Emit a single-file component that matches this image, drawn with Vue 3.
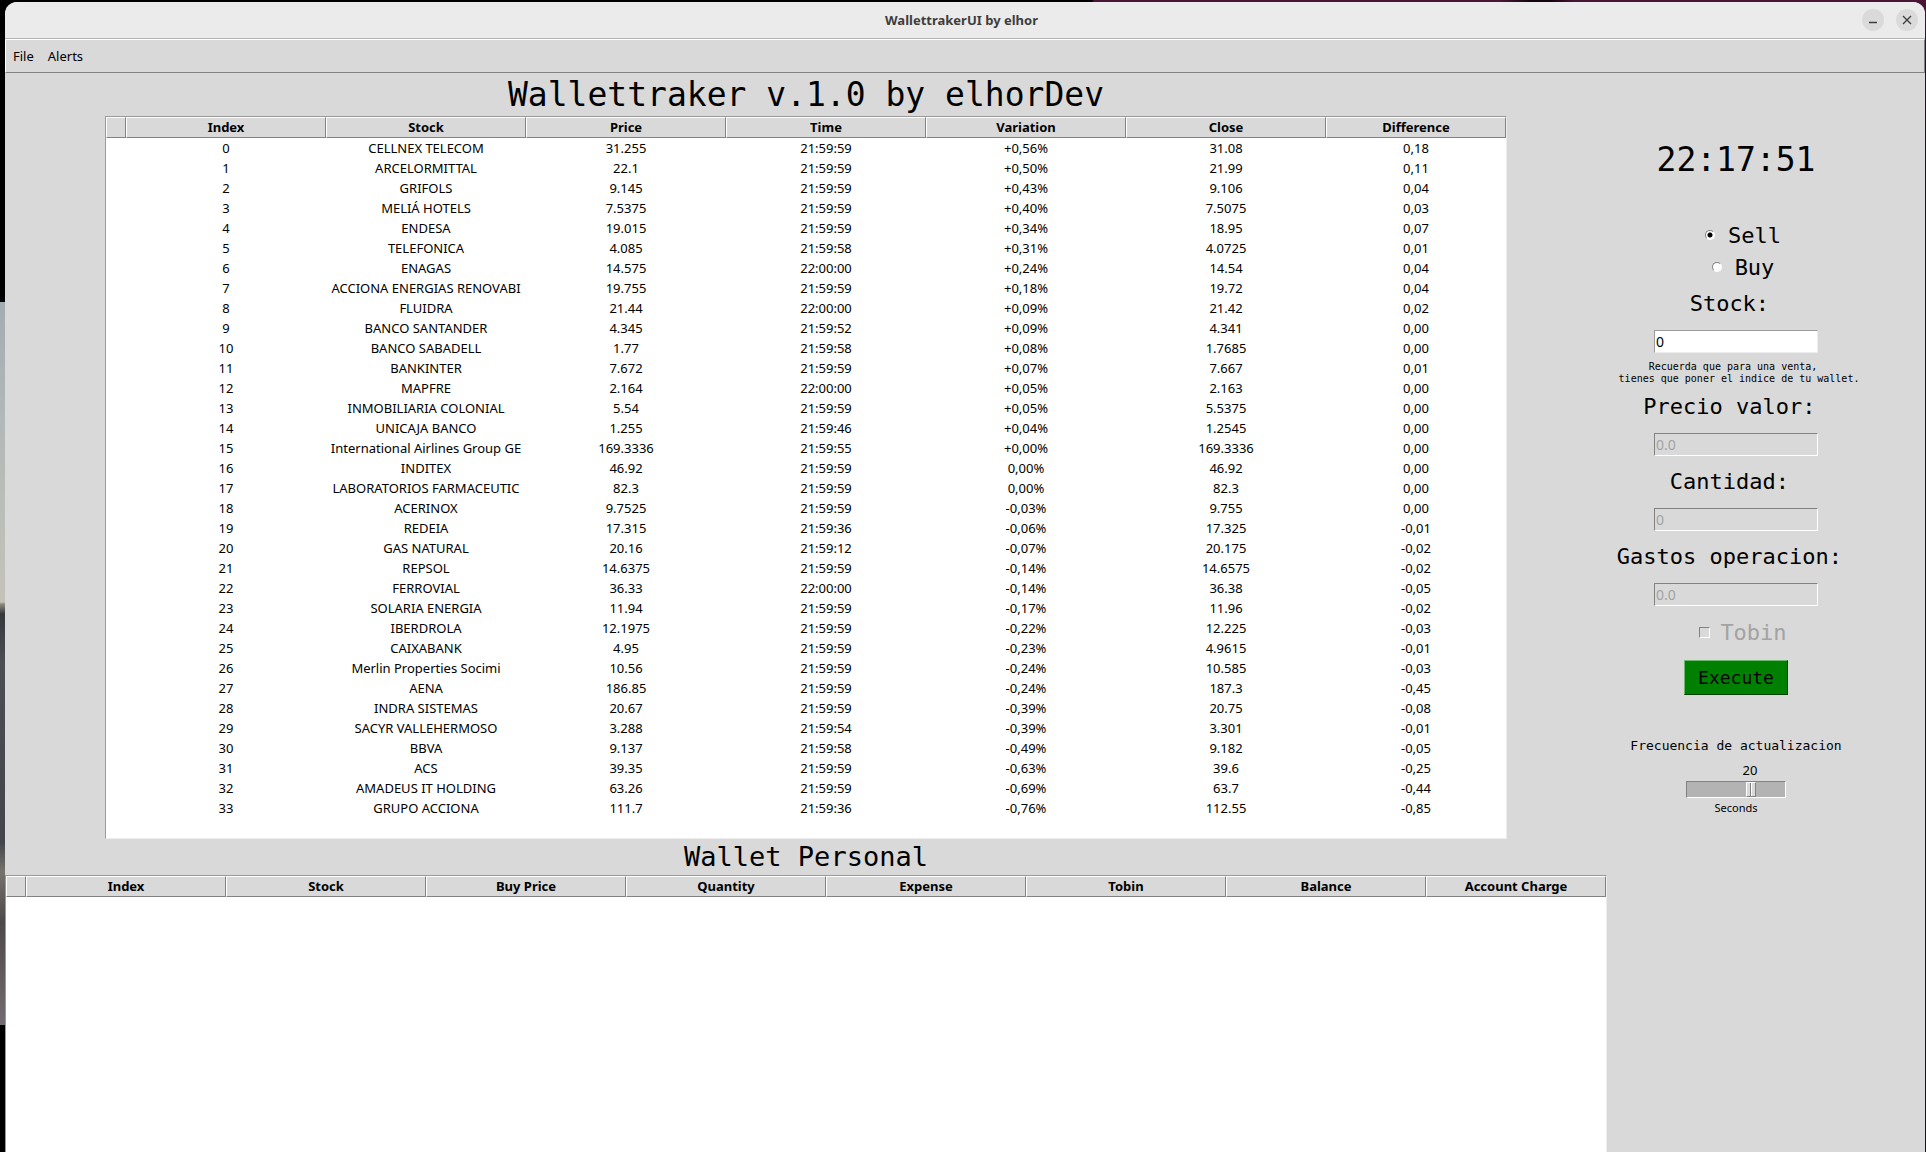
<script setup>
import { ref, computed } from 'vue'

const marketColumns = ['Index', 'Stock', 'Price', 'Time', 'Variation', 'Close', 'Difference']
const walletColumns = ['Index', 'Stock', 'Buy Price', 'Quantity', 'Expense', 'Tobin', 'Balance', 'Account Charge']

const quotes = [
  ['CELLNEX TELECOM', '31.255', '21:59:59', '+0,56%', '31.08', '0,18'],
  ['ARCELORMITTAL', '22.1', '21:59:59', '+0,50%', '21.99', '0,11'],
  ['GRIFOLS', '9.145', '21:59:59', '+0,43%', '9.106', '0,04'],
  ['MELIÁ HOTELS', '7.5375', '21:59:59', '+0,40%', '7.5075', '0,03'],
  ['ENDESA', '19.015', '21:59:59', '+0,34%', '18.95', '0,07'],
  ['TELEFONICA', '4.085', '21:59:58', '+0,31%', '4.0725', '0,01'],
  ['ENAGAS', '14.575', '22:00:00', '+0,24%', '14.54', '0,04'],
  ['ACCIONA ENERGIAS RENOVABI', '19.755', '21:59:59', '+0,18%', '19.72', '0,04'],
  ['FLUIDRA', '21.44', '22:00:00', '+0,09%', '21.42', '0,02'],
  ['BANCO SANTANDER', '4.345', '21:59:52', '+0,09%', '4.341', '0,00'],
  ['BANCO SABADELL', '1.77', '21:59:58', '+0,08%', '1.7685', '0,00'],
  ['BANKINTER', '7.672', '21:59:59', '+0,07%', '7.667', '0,01'],
  ['MAPFRE', '2.164', '22:00:00', '+0,05%', '2.163', '0,00'],
  ['INMOBILIARIA COLONIAL', '5.54', '21:59:59', '+0,05%', '5.5375', '0,00'],
  ['UNICAJA BANCO', '1.255', '21:59:46', '+0,04%', '1.2545', '0,00'],
  ['International Airlines Group GE', '169.3336', '21:59:55', '+0,00%', '169.3336', '0,00'],
  ['INDITEX', '46.92', '21:59:59', '0,00%', '46.92', '0,00'],
  ['LABORATORIOS FARMACEUTIC', '82.3', '21:59:59', '0,00%', '82.3', '0,00'],
  ['ACERINOX', '9.7525', '21:59:59', '-0,03%', '9.755', '0,00'],
  ['REDEIA', '17.315', '21:59:36', '-0,06%', '17.325', '-0,01'],
  ['GAS NATURAL', '20.16', '21:59:12', '-0,07%', '20.175', '-0,02'],
  ['REPSOL', '14.6375', '21:59:59', '-0,14%', '14.6575', '-0,02'],
  ['FERROVIAL', '36.33', '22:00:00', '-0,14%', '36.38', '-0,05'],
  ['SOLARIA ENERGIA', '11.94', '21:59:59', '-0,17%', '11.96', '-0,02'],
  ['IBERDROLA', '12.1975', '21:59:59', '-0,22%', '12.225', '-0,03'],
  ['CAIXABANK', '4.95', '21:59:59', '-0,23%', '4.9615', '-0,01'],
  ['Merlin Properties Socimi', '10.56', '21:59:59', '-0,24%', '10.585', '-0,03'],
  ['AENA', '186.85', '21:59:59', '-0,24%', '187.3', '-0,45'],
  ['INDRA SISTEMAS', '20.67', '21:59:59', '-0,39%', '20.75', '-0,08'],
  ['SACYR VALLEHERMOSO', '3.288', '21:59:54', '-0,39%', '3.301', '-0,01'],
  ['BBVA', '9.137', '21:59:58', '-0,49%', '9.182', '-0,05'],
  ['ACS', '39.35', '21:59:59', '-0,63%', '39.6', '-0,25'],
  ['AMADEUS IT HOLDING', '63.26', '21:59:59', '-0,69%', '63.7', '-0,44'],
  ['GRUPO ACCIONA', '111.7', '21:59:36', '-0,76%', '112.55', '-0,85'],
]

const operation = ref('sell')
const stock = ref('0')
const price = ref('0.0')
const quantity = ref('0')
const expense = ref('0.0')
const tobin = ref(false)
const frequency = ref(20)
const maxFrequency = 30

// The thumb is 10px wide and travels inside the 98px trough.
const thumbCenter = computed(() => Math.floor((frequency.value / maxFrequency) * 88) + 6)
</script>

<template>
  <div class="desktop">
    <div class="window">
      <header class="titlebar">
        <span class="caption">WallettrakerUI by elhor</span>
        <div class="window-buttons">
          <button type="button" aria-label="Minimize">
            <svg width="22" height="22" viewBox="0 0 22 22"><path d="M7 13.5h8" /></svg>
          </button>
          <button type="button" aria-label="Close">
            <svg width="22" height="22" viewBox="0 0 22 22"><path d="M7 7l8 8M15 7l-8 8" /></svg>
          </button>
        </div>
      </header>

      <nav class="menubar">
        <button type="button">File</button>
        <button type="button">Alerts</button>
      </nav>

      <div class="content">
        <main class="tables">
          <h1>Wallettraker v.1.0 by elhorDev</h1>
          <div class="tree market">
            <table>
              <colgroup>
                <col class="stub">
                <col v-for="n in marketColumns.length - 1" :key="n">
                <col class="last">
              </colgroup>
              <thead>
                <tr>
                  <th></th>
                  <th v-for="c in marketColumns" :key="c" scope="col">{{ c }}</th>
                </tr>
              </thead>
              <tbody>
                <tr v-for="(row, i) in quotes" :key="i">
                  <td></td>
                  <td>{{ i }}</td>
                  <td v-for="(cell, j) in row" :key="j"><div class="clip">{{ cell }}</div></td>
                </tr>
              </tbody>
            </table>
          </div>

          <h2>Wallet Personal</h2>
          <div class="tree wallet">
            <table>
              <colgroup>
                <col class="stub">
                <col v-for="n in walletColumns.length - 1" :key="n">
                <col class="last">
              </colgroup>
              <thead>
                <tr>
                  <th></th>
                  <th v-for="c in walletColumns" :key="c" scope="col">{{ c }}</th>
                </tr>
              </thead>
            </table>
          </div>
        </main>

        <aside class="panel">
          <form class="order" @submit.prevent>
            <time class="clock">22:17:51</time>

            <label class="choice"><input v-model="operation" type="radio" name="operation" value="sell">Sell</label>
            <label class="choice"><input v-model="operation" type="radio" name="operation" value="buy">Buy</label>

            <div class="field">
              <label for="stock">Stock:{{ ' ' }}</label>
              <input id="stock" v-model="stock" type="text">
            </div>
            <p class="note">{{ 'Recuerda que para una venta, \n tienes que poner el indice de tu wallet.' }}</p>
            <div class="field">
              <label for="price">Precio valor:{{ ' ' }}</label>
              <input id="price" v-model="price" type="text" disabled>
            </div>
            <div class="field">
              <label for="quantity">Cantidad:{{ ' ' }}</label>
              <input id="quantity" v-model="quantity" type="text" disabled>
            </div>
            <div class="field">
              <label for="expense">Gastos operacion:{{ ' ' }}</label>
              <input id="expense" v-model="expense" type="text" disabled>
            </div>

            <label class="choice tobin"><input v-model="tobin" type="checkbox" disabled>Tobin</label>
            <button class="execute" type="submit">Execute</button>

            <label class="frequency" for="frequency">Frecuencia de actualizacion</label>
            <div class="scale">
              <output for="frequency" :style="{ left: thumbCenter + 'px' }">{{ frequency }}</output>
              <input id="frequency" v-model.number="frequency" type="range" min="0" :max="maxFrequency">
            </div>
            <span class="unit">Seconds</span>
          </form>
        </aside>
      </div>
    </div>
  </div>
</template>

<style>
body {
  margin: 0;
}
</style>

<style scoped>
* {
  box-sizing: border-box;
}

.desktop {
  display: flex;
  height: 100vh;
  overflow: hidden;
  padding: 2px 1px 0 5px;
  font-family: "Noto Sans", sans-serif;
  font-size: 13px;
  color: #000;
  background:
    linear-gradient(#a3acb1 0, #b3b8b8 120px, #c3c3b9 300px, #8c8c82 302px, #36383c 312px, #4c4e54 360px, #44464c 540px, #76726d 570px, #4d484a 620px, #736c70 724px) 0 302px / 5px 723px no-repeat,
    linear-gradient(90deg, #000 0, #000 1092px, #4a1637 1094px, #4a1637 1500px, #16040f 1530px, #16040f 1550px, #4a1637 1575px) 0 0 / 100% 2px no-repeat,
    linear-gradient(#4a1637 0, #2c0c22 60px, #17131a 140px, #17131a 100%) 100% 0 / 20px 100% no-repeat,
    #000;
}

.window {
  display: flex;
  flex: 1;
  flex-direction: column;
  min-width: 0;
  overflow: hidden;
  background: #d9d9d9;
  border-radius: 12px 12px 0 0;
}

.titlebar {
  display: grid;
  grid-template-columns: 1fr auto 1fr;
  align-items: center;
  height: 37px;
  padding-right: 7px;
  background: #ebebeb;
  border-bottom: 1px solid #b5b5b5;
}

.caption {
  grid-column: 2;
  font-weight: 700;
  color: #3d3d3d;
}

.window-buttons {
  display: flex;
  gap: 12px;
  justify-self: end;
}

.window-buttons button {
  width: 22px;
  height: 22px;
  padding: 0;
  background: #dadada;
  border: 0;
  border-radius: 50%;
}

.window-buttons svg {
  display: block;
  fill: none;
  stroke: #3d3d3d;
  stroke-width: 1.3;
}

.menubar {
  display: flex;
  gap: 4px;
  height: 34px;
  padding-left: 2px;
  border: 1px solid;
  border-color: #fff #828282 #828282 #fff;
}

.menubar button {
  padding: 0 5px;
  font: inherit;
  color: #000;
  background: none;
  border: 0;
}

.content {
  display: flex;
  flex: 1;
}

.tables {
  display: flex;
  flex: 1;
  flex-direction: column;
  min-width: 0;
}

h1,
h2 {
  margin: 0;
  font-family: "DejaVu Sans Mono", monospace;
  font-weight: 400;
  text-align: center;
}

h1 {
  font-size: 33px;
  line-height: 43px;
}

h2 {
  font-size: 27px;
  line-height: 36px;
}

.tree {
  background: #fff;
  border: 1px solid;
  border-color: #9a9a9a #ededed #ededed #9a9a9a;
}

.market {
  padding-bottom: 20px;
  margin: 0 100px;
}

.wallet {
  flex: 1;
  border-bottom: 0;
}

table {
  width: 100%;
  table-layout: fixed;
  border-spacing: 0;
}

.stub {
  width: 20px;
}

.last {
  width: 180px;
}

th {
  height: 21px;
  padding: 0;
  line-height: 19px;
  background: #d9d9d9;
  border: 1px solid;
  border-color: #fff #828282 #828282 #fff;
}

td {
  height: 20px;
  padding: 0 4px;
  line-height: 20px;
  text-align: center;
}

.clip {
  overflow: hidden;
  white-space: nowrap;
}

.panel {
  flex: 0 0 318px;
}

.order {
  display: flex;
  flex-direction: column;
  align-items: center;
  width: 258px;
  font-family: "DejaVu Sans Mono", monospace;
}

.clock {
  margin: 67px 0 39px;
  font-size: 33px;
  line-height: 40px;
}

.choice {
  display: flex;
  align-items: center;
  height: 32px;
  padding-left: 14px;
  font-size: 22px;
}

.choice input {
  width: 10px;
  height: 10px;
  margin: 0 13px 0 0;
  appearance: none;
  background: #fff;
  border: 1px solid;
  border-color: #828282 #fff #fff #828282;
  border-radius: 50%;
}

.choice input[type="radio"]:checked {
  background: radial-gradient(circle, #000 2px, #fff 3px);
}

.tobin {
  height: 30px;
  margin-top: 6px;
  color: #a3a3a3;
}

.tobin input {
  width: 11px;
  height: 11px;
  margin-right: 10px;
  background: #d9d9d9;
  border-radius: 0;
}

.field {
  display: flex;
  flex-direction: column;
  align-items: center;
  margin: 6px 0 5px;
}

.field label {
  margin-bottom: 11px;
  font-size: 22px;
  line-height: 30px;
  white-space: pre;
}

.field input {
  width: 164px;
  height: 23px;
  padding: 0 1px;
  font-family: "Noto Sans", sans-serif;
  font-size: 14px;
  color: #000;
  background: #fff;
  border: 1px solid;
  border-color: #9a9a9a #ededed #ededed #9a9a9a;
}

.field input:disabled {
  color: #a3a3a3;
  background: #d9d9d9;
  border-color: #828282 #fff #fff #828282;
}

.note {
  margin: 3px 0 1px;
  font-size: 10px;
  line-height: 12px;
  text-align: center;
  white-space: pre;
}

.execute {
  width: 104px;
  height: 35px;
  padding: 0;
  margin-top: 13px;
  font-family: inherit;
  font-size: 18px;
  color: #000;
  background: #008000;
  border: 1px solid;
  border-color: #6db66d #004000 #004000 #6db66d;
}

.frequency {
  margin-top: 41px;
  font-size: 13px;
  line-height: 20px;
}

.scale {
  position: relative;
  width: 100px;
  padding-top: 25px;
}

.scale output {
  position: absolute;
  top: 6px;
  font-family: "Noto Sans", sans-serif;
  font-size: 13px;
  line-height: 16px;
  transform: translateX(-50%);
}

.scale input {
  display: block;
  width: 100%;
  height: 17px;
  margin: 0;
  appearance: none;
  background: #b3b3b3;
  border: 1px solid;
  border-color: #828282 #fff #fff #828282;
}

.scale input::-webkit-slider-thumb {
  width: 10px;
  height: 15px;
  appearance: none;
  background: linear-gradient(90deg, #d9d9d9 3px, #828282 3px 4px, #fff 4px 5px, #d9d9d9 5px);
  border: 1px solid;
  border-color: #fff #828282 #828282 #fff;
}

.unit {
  margin-top: 2px;
  font-family: "Noto Sans", sans-serif;
  font-size: 11px;
  line-height: 16px;
}
</style>
